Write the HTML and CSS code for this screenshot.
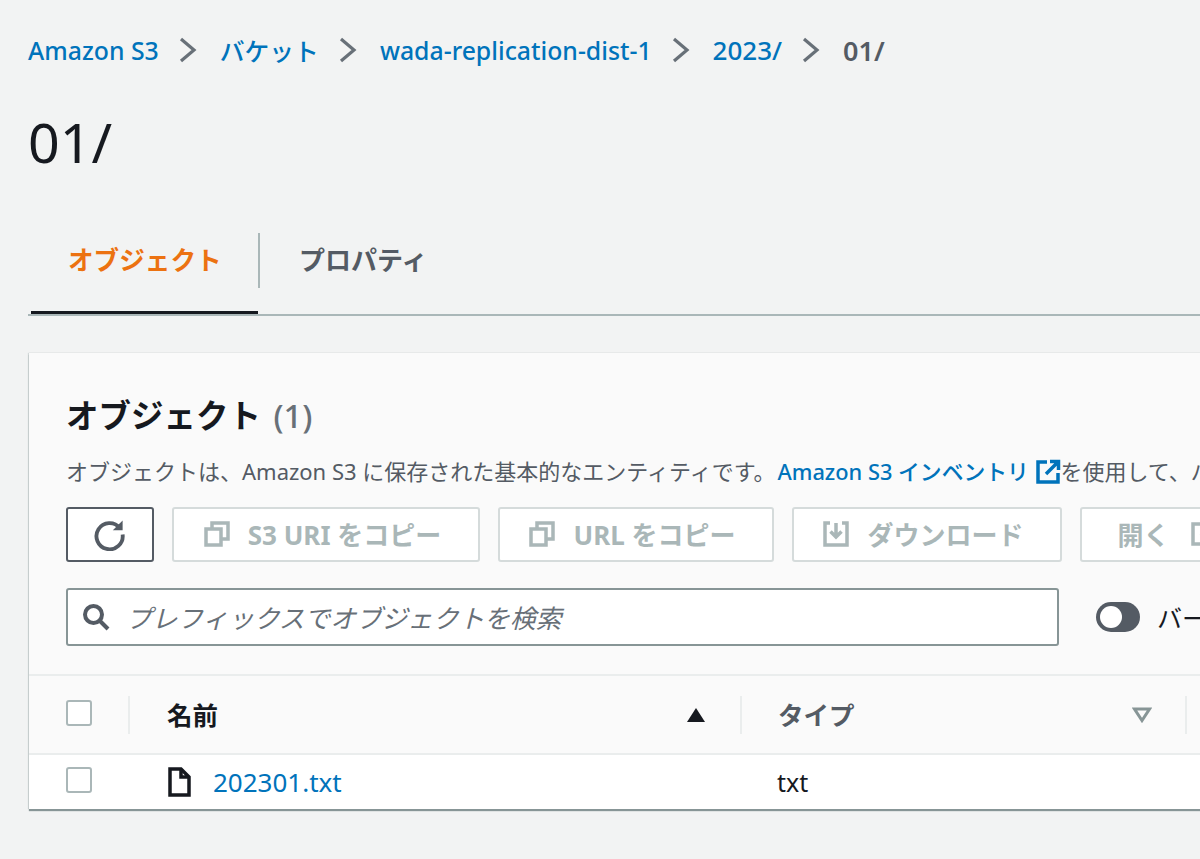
FILE: index.html
```html
<!DOCTYPE html>
<html lang="ja">
<head>
<meta charset="utf-8">
<title>01/ - Amazon S3</title>
<link rel="stylesheet" href="styles.css">
</head>
<body>
<main class="page">
  <nav class="crumbs">
    <a>Amazon S3</a>
    <svg class="chev" viewBox="0 0 18 26"><path d="M2 2l13 11L2 24"/></svg>
    <a>バケット</a>
    <svg class="chev" viewBox="0 0 18 26"><path d="M2 2l13 11L2 24"/></svg>
    <a>wada-replication-dist-1</a>
    <svg class="chev" viewBox="0 0 18 26"><path d="M2 2l13 11L2 24"/></svg>
    <a class="year">2023/</a>
    <svg class="chev" viewBox="0 0 18 26"><path d="M2 2l13 11L2 24"/></svg>
    <span class="current">01/</span>
  </nav>
  <h1 class="title">01/</h1>
  <div class="tabs">
    <div class="tab active">オブジェクト</div>
    <div class="tab-sep"></div>
    <div class="tab">プロパティ</div>
  </div>
  <section class="card">
    <header class="card-head">
      <h2 class="card-title">オブジェクト <span class="count">(1)</span></h2>
      <p class="desc">オブジェクトは、Amazon S3 に保存された基本的なエンティティです。<a>Amazon S3 インベントリ <svg class="ext" viewBox="0 0 26 26"><path d="M12 3H3v20h20v-9"/><path d="M15 2.500h8.500V11M23 3L11 15"/></svg></a>を使用して、バケット内のすべてのオブジェクトのリストを取得できます。</p>
      <div class="toolbar">
        <button class="btn refresh"><svg class="ic-refresh" viewBox="0 0 32 32"><path d="M25.500 11A12 12 0 1 0 28 17"/><path class="solid" d="M19 13h9V4z"/></svg></button>
        <button class="btn off w-s3"><svg class="ic" viewBox="0 0 26 26"><rect x="2" y="8" width="15" height="16"/><path d="M8 7V2h16v16h-6"/></svg>S3 URI をコピー</button>
        <button class="btn off w-url"><svg class="ic" viewBox="0 0 26 26"><rect x="2" y="8" width="15" height="16"/><path d="M8 7V2h16v16h-6"/></svg>URL をコピー</button>
        <button class="btn off w-dl"><svg class="ic" viewBox="0 0 26 26"><path d="M7 2H2v22h22V2h-5"/><path d="M13 2v13M7.500 10.500L13 16l5.500-5.500"/></svg>ダウンロード</button>
        <button class="btn off w-open">開く<svg class="ic ic-after" viewBox="0 0 26 26"><path d="M12 3H3v20h20v-9"/><path d="M15 3h8v8M23 3L11 15"/></svg></button>
      </div>
      <div class="filter">
        <div class="search">
          <svg class="ic-search" viewBox="0 0 28 28"><circle cx="11.500" cy="11.500" r="8.500"/><path d="M18 18l8 8"/></svg>
          <span class="placeholder">プレフィックスでオブジェクトを検索</span>
        </div>
        <div class="toggle"><span class="knob"></span></div>
        <span class="toggle-label">バージョンを表示</span>
      </div>
    </header>
    <div class="row head">
      <div class="cell c-check"><span class="check"></span></div>
      <div class="sep"></div>
      <div class="cell c-name"><span class="th">名前</span><svg class="sort" viewBox="0 0 20 16"><path class="up" d="M10 1l9 14H1z"/></svg></div>
      <div class="sep"></div>
      <div class="cell c-type"><span class="th muted">タイプ</span><svg class="sort" viewBox="0 0 20 16"><path class="down" d="M2.500 2h15L10 13.500z"/></svg></div>
      <div class="sep"></div>
    </div>
    <div class="row body">
      <div class="cell c-check"><span class="check"></span></div>
      <div class="sep blank"></div>
      <div class="cell c-name"><svg class="ic-file" viewBox="0 0 23 30"><path d="M2 2h11l8 8v18H2z"/><path d="M13 2v8h8"/></svg><a class="file">202301.txt</a></div>
      <div class="sep blank"></div>
      <div class="cell c-type td">txt</div>
    </div>
  </section>
</main>
</body>
</html>
```
FILE: styles.css
```css
html, body { margin: 0; padding: 0; height: 859px; overflow: hidden; background: #f2f3f3; }
body, button { font-family: "Noto Sans", "Noto Sans CJK JP", sans-serif; }
a { color: #0073bb; }
.page { width: 1172px; padding-left: 28px; }

.crumbs { display: flex; align-items: center; height: 34px; margin-top: 33px; font-size: 24.800px; font-weight: 500; white-space: nowrap; }
.chev { width: 18px; height: 26px; margin: 0 23px 0 20px; flex: none; fill: none; stroke: #687078; stroke-width: 3.200; }
.year { font-size: 26px; }
.current { color: #545b64; font-weight: 600; font-size: 27px; }

.title { margin: 39px 0 0; height: 72px; line-height: 72px; font-size: 55.500px; font-weight: 400; color: #16191f; }

.tabs { display: flex; align-items: flex-start; height: 81px; margin-top: 55px; width: 1200px; border-bottom: 2px solid #aab7b8; }
.tab { display: flex; align-items: center; padding-bottom: 4px; box-sizing: border-box; font-size: 26px; font-weight: 700; color: #545b64; white-space: nowrap; height: 55px; }
.tab.active { color: #ec7211; font-size: 25.600px; width: 227px; height: 81px; margin-left: 3px; padding: 0 0 30px 37px; box-sizing: border-box; box-shadow: inset 0 -3px 0 #16191f; }
.tab-sep { width: 2px; height: 55px; background: #aab7b8; margin: 0 39px 0 0; }

.card { width: 1300px; margin: 37px 0 0 1px; background: #fff; box-shadow: 0 2px 1px #879596, 0 0 1px #c8cfcf, -1px 0 1px #d5dbdb; }
.card-head { background: #fafafa; height: 323px; padding: 0 0 0 37px; box-sizing: border-box; border-bottom: 2px solid #eaeded; overflow: hidden; }
.card-title { margin: 0; padding-top: 41px; height: 44px; line-height: 44px; font-size: 32.500px; font-weight: 700; color: #16191f; white-space: nowrap; box-sizing: content-box; }
.count { margin-left: 4px; font-weight: 500; color: #687078; }
.desc { margin: 17px 0 0; height: 32px; line-height: 32px; font-size: 22px; color: #545b64; white-space: nowrap; }
.desc a { margin-left: 2px; font-size: 21.800px; font-weight: 500; }
.ext { width: 26px; height: 26px; vertical-align: -5px; fill: none; stroke: #0073bb; stroke-width: 3.500; }

.toolbar { display: flex; gap: 18px; margin-top: 20px; }
.btn { display: flex; align-items: center; justify-content: center; flex: none; height: 55px; padding: 0 0 2px; box-sizing: border-box; border: 2px solid #d5dbdb; border-radius: 3px; background: #fff; font-size: 26px; font-weight: 700; color: #aab7b8; white-space: nowrap; }
.btn.off { padding-right: 7px; }
.btn.refresh { width: 88px; padding-right: 2px; border-color: #545b64; }
.ic-refresh { width: 35px; height: 35px; fill: none; stroke: #545b64; stroke-width: 3.500; }
.ic-refresh .solid { fill: #545b64; stroke: none; }
.ic { width: 26px; height: 26px; margin-right: 18px; flex: none; fill: none; stroke: #aab7b8; stroke-width: 3.500; }
.ic-after { margin: 0 0 0 20px; }
.w-s3 { width: 308px; }
.w-url { width: 276px; }
.w-dl { width: 270px; }
.w-open { width: 180px; }

.filter { display: flex; align-items: center; margin-top: 26px; white-space: nowrap; }
.search { display: flex; align-items: center; width: 993px; height: 58px; box-sizing: border-box; padding-left: 14px; background: #fff; border: 2px solid #879596; border-radius: 3px; flex: none; }
.ic-search { width: 28px; height: 28px; margin-right: 16px; flex: none; fill: none; stroke: #545b64; stroke-width: 4; }
.placeholder { font-size: 25.700px; font-style: italic; color: #687078; }
.toggle { position: relative; width: 44px; height: 30px; margin-left: 37px; border-radius: 15px; background: #545b64; flex: none; }
.knob { position: absolute; left: 4px; top: 4px; width: 22px; height: 22px; border-radius: 50%; background: #fff; }
.toggle-label { margin-left: 17px; font-size: 25px; color: #16191f; }

.row { display: flex; align-items: center; }
.row.head { height: 77px; background: #fafafa; border-bottom: 2px solid #eaeded; box-sizing: content-box; }
.row.body { height: 54px; background: #fff; }
.cell { display: flex; align-items: center; box-sizing: border-box; flex: none; white-space: nowrap; }
.sep { width: 2px; height: 38px; background: #eaeded; flex: none; }
.sep.blank { background: transparent; }
.c-check { width: 99px; padding-left: 37px; }
.c-name { width: 610px; padding: 0 34px 0 37px; justify-content: flex-start; }
.c-type { width: 443px; padding: 0 33px 0 36px; }
.check { display: block; width: 26px; height: 26px; margin-bottom: 4px; box-sizing: border-box; border: 2px solid #aab7b8; border-radius: 3px; background: #fff; }
.th { flex: 1; margin-bottom: 2px; font-size: 25.500px; font-weight: 700; color: #16191f; }
.th.muted { color: #545b64; }
.sort { width: 20px; height: 16px; flex: none; }
.up { fill: #16191f; }
.down { fill: none; stroke: #879596; stroke-width: 3; }
.ic-file { width: 23px; height: 30px; margin: 0 22px 0 1px; flex: none; fill: none; stroke: #16191f; stroke-width: 3.500; }
.file { font-size: 26px; }
.td { padding-left: 35px; font-size: 25px; color: #16191f; }
```
